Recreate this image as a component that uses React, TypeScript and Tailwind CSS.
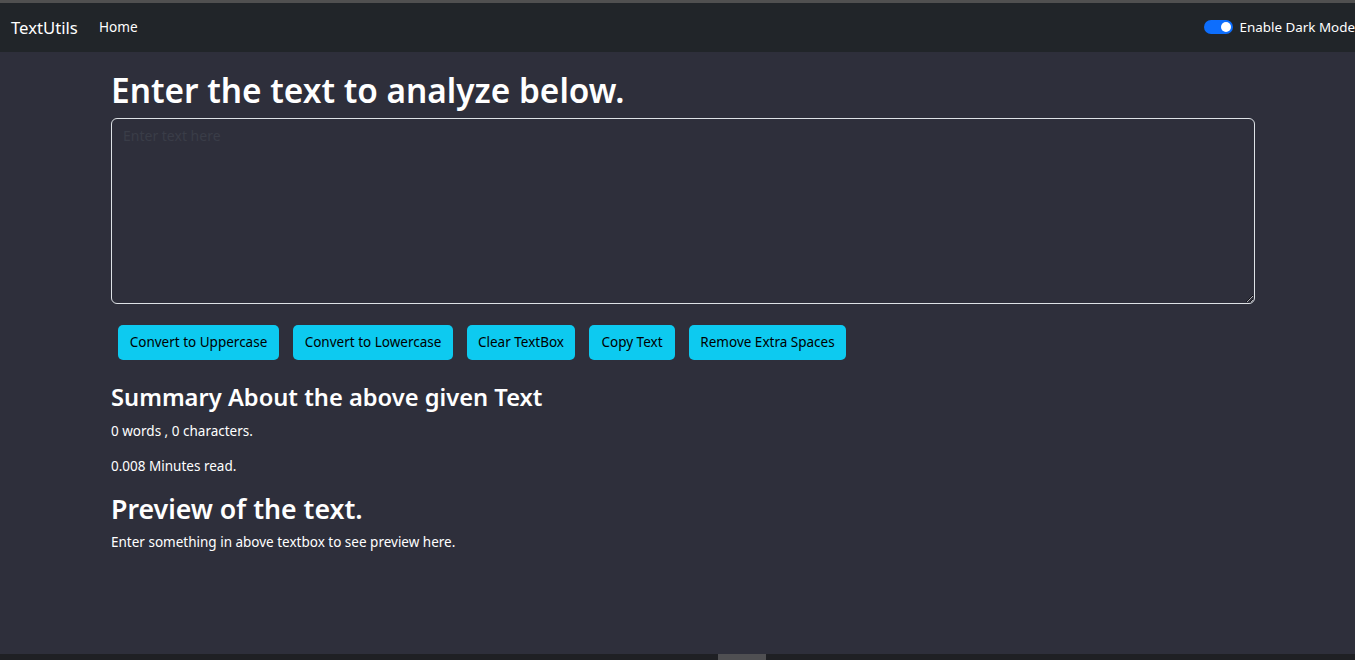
import React, { useState } from "react";

const buttons = [
  { label: "Convert to Uppercase", w: "w-[161px]" },
  { label: "Convert to Lowercase", w: "w-[160px]" },
  { label: "Clear TextBox", w: "w-[108px]" },
  { label: "Copy Text", w: "w-[86px]" },
  { label: "Remove Extra Spaces", w: "w-[157px]" },
];

export default function App() {
  const [text, setText] = useState("");

  const words = text.split(/\s+/).filter((w) => w.length !== 0).length;

  return (
    <div className="h-[660px] w-full overflow-hidden flex flex-col bg-[#2e2f3b] text-white font-['Noto_Sans',sans-serif]">
      {/* navbar */}
      <nav className="h-[52px] shrink-0 border-t-[3px] border-[#505050] bg-[#212529] flex items-center whitespace-nowrap">
        <span className="ml-[11px] text-[16.7px] text-white">TextUtils</span>
        <a className="ml-[21px] text-[13.6px] text-white">Home</a>
        <div className="ml-auto flex items-center gap-[7px]">
          <div className="w-[29px] h-[14px] rounded-full bg-[#0d6efd] flex items-center justify-end pr-[2px]">
            <div className="w-[10px] h-[10px] rounded-full bg-white" />
          </div>
          <span className="text-[13.4px] text-white">Enable Dark Mode</span>
        </div>
      </nav>

      {/* main */}
      <main className="flex-1 pl-[111px]">
        <h1 className="mt-[17px] text-[33.4px] leading-[43px] font-semibold">Enter the text to analyze below.</h1>
        <textarea
          value={text}
          onChange={(e) => setText(e.target.value)}
          placeholder="Enter text here"
          className="mt-[6px] block w-[1144px] h-[186px] rounded-[6px] border border-[#dee2e6] bg-transparent px-[11px] py-[6px] text-[14px] text-white placeholder:text-[#3a3d48] outline-none"
        />
        <div className="mt-[21px] ml-[7px] flex gap-[14px]">
          {buttons.map((b) => (
            <button
              key={b.label}
              className={`${b.w} h-[35px] rounded-[5px] bg-[#0dcaf0] text-[13.5px] text-black whitespace-nowrap`}
            >
              {b.label}
            </button>
          ))}
        </div>

        <h2 className="mt-[22px] text-[23.7px] leading-[30px] font-semibold">Summary About the above given Text</h2>
        <p className="mt-[9px] text-[13.5px] leading-[20px]">
          {words} words , {text.length} characters.
        </p>
        <p className="mt-[15px] text-[13.5px] leading-[20px]">
          {words === 0 ? "0.008" : (0.008 * words).toFixed(3)} Minutes read.
        </p>
        <h2 className="mt-[17px] text-[26.7px] leading-[32px] font-semibold">Preview of the text.</h2>
        <p className="mt-[7px] text-[13.5px] leading-[20px]">
          {text.length > 0 ? text : "Enter something in above textbox to see preview here."}
        </p>
      </main>

      {/* horizontal scrollbar */}
      <div className="h-[6px] shrink-0 bg-[#1f2024]">
        <div className="ml-[718px] w-[48px] h-full bg-[#4f4f52]" />
      </div>
    </div>
  );
}
